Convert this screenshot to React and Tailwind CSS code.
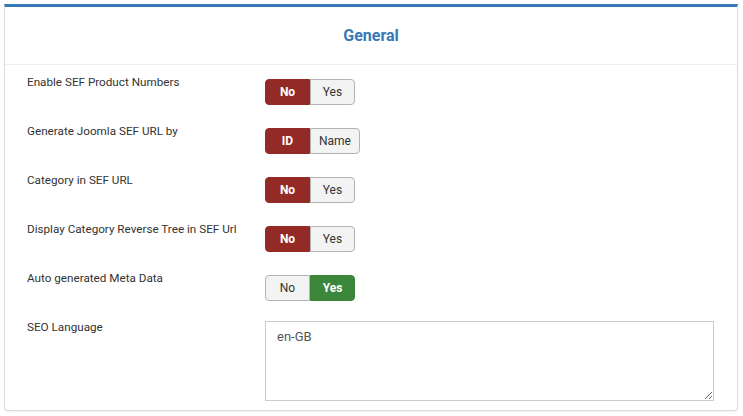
import React from 'react';

const ROWS = [
  { label: 'Enable SEF Product Numbers', options: ['No', 'Yes'], active: 0 },
  { label: 'Generate Joomla SEF URL by', options: ['ID', 'Name'], active: 0 },
  { label: 'Category in SEF URL', options: ['No', 'Yes'], active: 0 },
  { label: 'Display Category Reverse Tree in SEF Url', options: ['No', 'Yes'], active: 0 },
  { label: 'Auto generated Meta Data', options: ['No', 'Yes'], active: 1 },
];

function Toggle({ options, active }) {
  return (
    <div className="flex h-[26px]">
      {options.map((opt, i) => {
        const on = i === active;
        const color = on
          ? (opt === 'Yes' ? 'bg-[#3a873b] border-[#3a873b] text-white font-bold' : 'bg-[#942a25] border-[#942a25] text-white font-bold')
          : 'bg-[#f3f3f3] border-[#b3b3b3] text-[#333]';
        const round = i === 0 ? 'rounded-l-[4px]' : 'rounded-r-[4px]';
        const w = opt === 'Name' ? 'w-[50px]' : 'w-[45px]';
        return (
          <button key={opt} className={`${w} ${color} ${round} border text-[12px] flex items-center justify-center`}>
            {opt}
          </button>
        );
      })}
    </div>
  );
}

export default function App() {
  return (
    <div className="w-[743px] h-[416px] bg-white pt-[4px] px-[4px] font-['Roboto',sans-serif] text-[#333]">
      <div className="w-[734px] h-[407px] border border-[#dcdcdc] border-t-[3px] border-t-[#3778b7] rounded-b-[4px] shadow-[0_1px_2px_rgba(0,0,0,0.06)]">
        <div className="h-[58px] flex items-center justify-center border-b border-[#eeeeee]">
          <h2 className="text-[16px] font-bold text-[#3778b7]">General</h2>
        </div>
        <div className="pl-[22px] pt-[14px]">
          {ROWS.map(r => (
            <div key={r.label} className="flex h-[49px]">
              <div className="w-[238px] text-[11.7px] leading-[14px] -mt-[4px]">{r.label}</div>
              <Toggle options={r.options} active={r.active} />
            </div>
          ))}
          <div className="flex -mt-[3px]">
            <div className="w-[238px] text-[11.7px] leading-[14px] -mt-[1px]">SEO Language</div>
            <textarea
              defaultValue="en-GB"
              className="w-[449px] h-[80px] border border-[#cccccc] px-[11px] py-[5px] text-[13px] text-[#555] outline-none resize-y"
            />
          </div>
        </div>
      </div>
    </div>
  );
}
